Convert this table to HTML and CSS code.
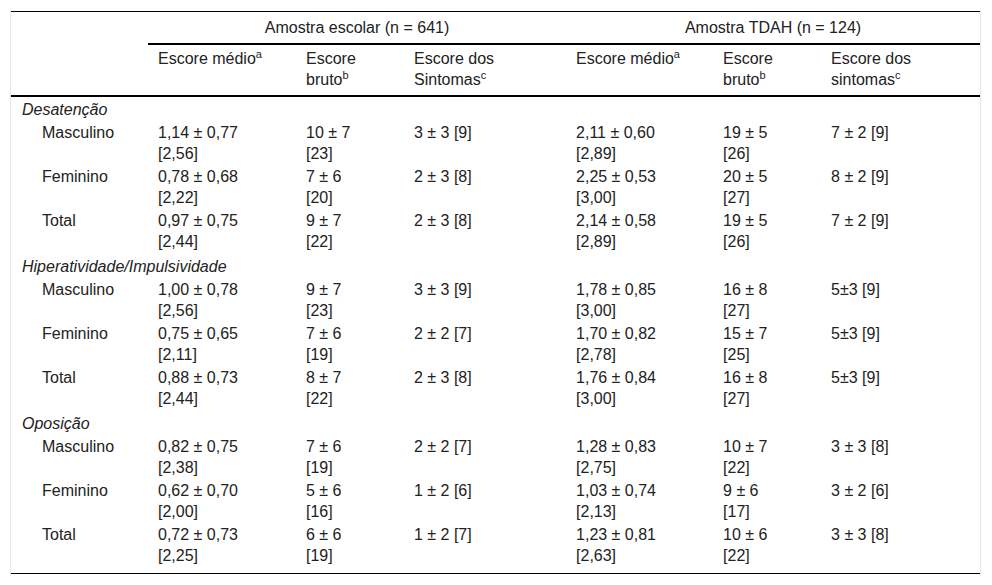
FILE: index.html
```html
<!DOCTYPE html>
<html lang="pt">
<head>
<meta charset="utf-8">
<title>Tabela</title>
<link rel="stylesheet" href="styles.css">
</head>
<body>
<div class="frame">
<table class="data">
<colgroup>
<col class="c0"><col class="c1"><col class="c2"><col class="c3"><col class="c4"><col class="c5"><col class="c6">
</colgroup>
<thead>
<tr class="h1">
<th></th>
<th colspan="3" class="span">Amostra escolar (n = 641)</th>
<th colspan="3" class="span">Amostra TDAH (n = 124)</th>
</tr>
<tr class="h2">
<th></th>
<th>Escore médio<sup>a</sup></th>
<th>Escore<br>bruto<sup>b</sup></th>
<th>Escore dos<br>Sintomas<sup>c</sup></th>
<th>Escore médio<sup>a</sup></th>
<th>Escore<br>bruto<sup>b</sup></th>
<th>Escore dos<br>sintomas<sup>c</sup></th>
</tr>
</thead>
<tbody>
<tr class="sec first"><td colspan="7">Desatenção</td></tr>
<tr><td class="lab">Masculino</td><td>1,14 ± 0,77<br>[2,56]</td><td>10 ± 7<br>[23]</td><td>3 ± 3 [9]</td><td>2,11 ± 0,60<br>[2,89]</td><td>19 ± 5<br>[26]</td><td>7 ± 2 [9]</td></tr>
<tr><td class="lab">Feminino</td><td>0,78 ± 0,68<br>[2,22]</td><td>7 ± 6<br>[20]</td><td>2 ± 3 [8]</td><td>2,25 ± 0,53<br>[3,00]</td><td>20 ± 5<br>[27]</td><td>8 ± 2 [9]</td></tr>
<tr><td class="lab">Total</td><td>0,97 ± 0,75<br>[2,44]</td><td>9 ± 7<br>[22]</td><td>2 ± 3 [8]</td><td>2,14 ± 0,58<br>[2,89]</td><td>19 ± 5<br>[26]</td><td>7 ± 2 [9]</td></tr>
<tr class="sec"><td colspan="7">Hiperatividade/Impulsividade</td></tr>
<tr><td class="lab">Masculino</td><td>1,00 ± 0,78<br>[2,56]</td><td>9 ± 7<br>[23]</td><td>3 ± 3 [9]</td><td>1,78 ± 0,85<br>[3,00]</td><td>16 ± 8<br>[27]</td><td>5±3 [9]</td></tr>
<tr><td class="lab">Feminino</td><td>0,75 ± 0,65<br>[2,11]</td><td>7 ± 6<br>[19]</td><td>2 ± 2 [7]</td><td>1,70 ± 0,82<br>[2,78]</td><td>15 ± 7<br>[25]</td><td>5±3 [9]</td></tr>
<tr><td class="lab">Total</td><td>0,88 ± 0,73<br>[2,44]</td><td>8 ± 7<br>[22]</td><td>2 ± 3 [8]</td><td>1,76 ± 0,84<br>[3,00]</td><td>16 ± 8<br>[27]</td><td>5±3 [9]</td></tr>
<tr class="sec"><td colspan="7">Oposição</td></tr>
<tr><td class="lab">Masculino</td><td>0,82 ± 0,75<br>[2,38]</td><td>7 ± 6<br>[19]</td><td>2 ± 2 [7]</td><td>1,28 ± 0,83<br>[2,75]</td><td>10 ± 7<br>[22]</td><td>3 ± 3 [8]</td></tr>
<tr><td class="lab">Feminino</td><td>0,62 ± 0,70<br>[2,00]</td><td>5 ± 6<br>[16]</td><td>1 ± 2 [6]</td><td>1,03 ± 0,74<br>[2,13]</td><td>9 ± 6<br>[17]</td><td>3 ± 2 [6]</td></tr>
<tr class="last"><td class="lab">Total</td><td>0,72 ± 0,73<br>[2,25]</td><td>6 ± 6<br>[19]</td><td>1 ± 2 [7]</td><td>1,23 ± 0,81<br>[2,63]</td><td>10 ± 6<br>[22]</td><td>3 ± 3 [8]</td></tr>
</tbody>
</table>
</div>
</body>
</html>
```
FILE: styles.css
```css
html, body {
  margin: 0;
  padding: 0;
  background: #fff;
}
body {
  font-family: "Liberation Sans", Arial, sans-serif;
  font-size: 16px;
  color: #222;
}
.frame {
  margin: 10px 0 0 10px;
  width: 969px;
  border-left: 1px solid #e6e6e6;
  border-right: 1px solid #e6e6e6;
  padding: 1px 0 2px 0;
}
.data {
  width: 969px;
  border-collapse: collapse;
  table-layout: fixed;
  border-top: 1px solid #000;
  border-bottom: 1px solid #000;
}
.c0 { width: 137px; }
.c1 { width: 148px; }
.c2 { width: 108px; }
.c3 { width: 162px; }
.c4 { width: 147px; }
.c5 { width: 108px; }
.c6 { width: 159px; }
th, td {
  padding: 0 0 0 10px;
  font-weight: normal;
  text-align: left;
  vertical-align: top;
  line-height: 21px;
}
.h1 th {
  height: 31px;
  padding: 0;
  vertical-align: middle;
}
.h1 th.span {
  text-align: center;
  border-bottom: 2px solid #000;
}
.h2 th {
  padding-top: 3px;
  padding-bottom: 5px;
  border-bottom: 2px solid #000;
}
sup {
  font-size: 11px;
  line-height: 0;
  vertical-align: 6px;
}
tbody td {
  padding-top: 1px;
  padding-bottom: 1px;
}
.sec td {
  font-style: italic;
  padding-left: 11px;
  padding-top: 3px;
}
.sec.first td {
  padding-top: 2px;
}
td.lab {
  padding-left: 31px;
}
.last td {
  padding-bottom: 7px;
}
```
